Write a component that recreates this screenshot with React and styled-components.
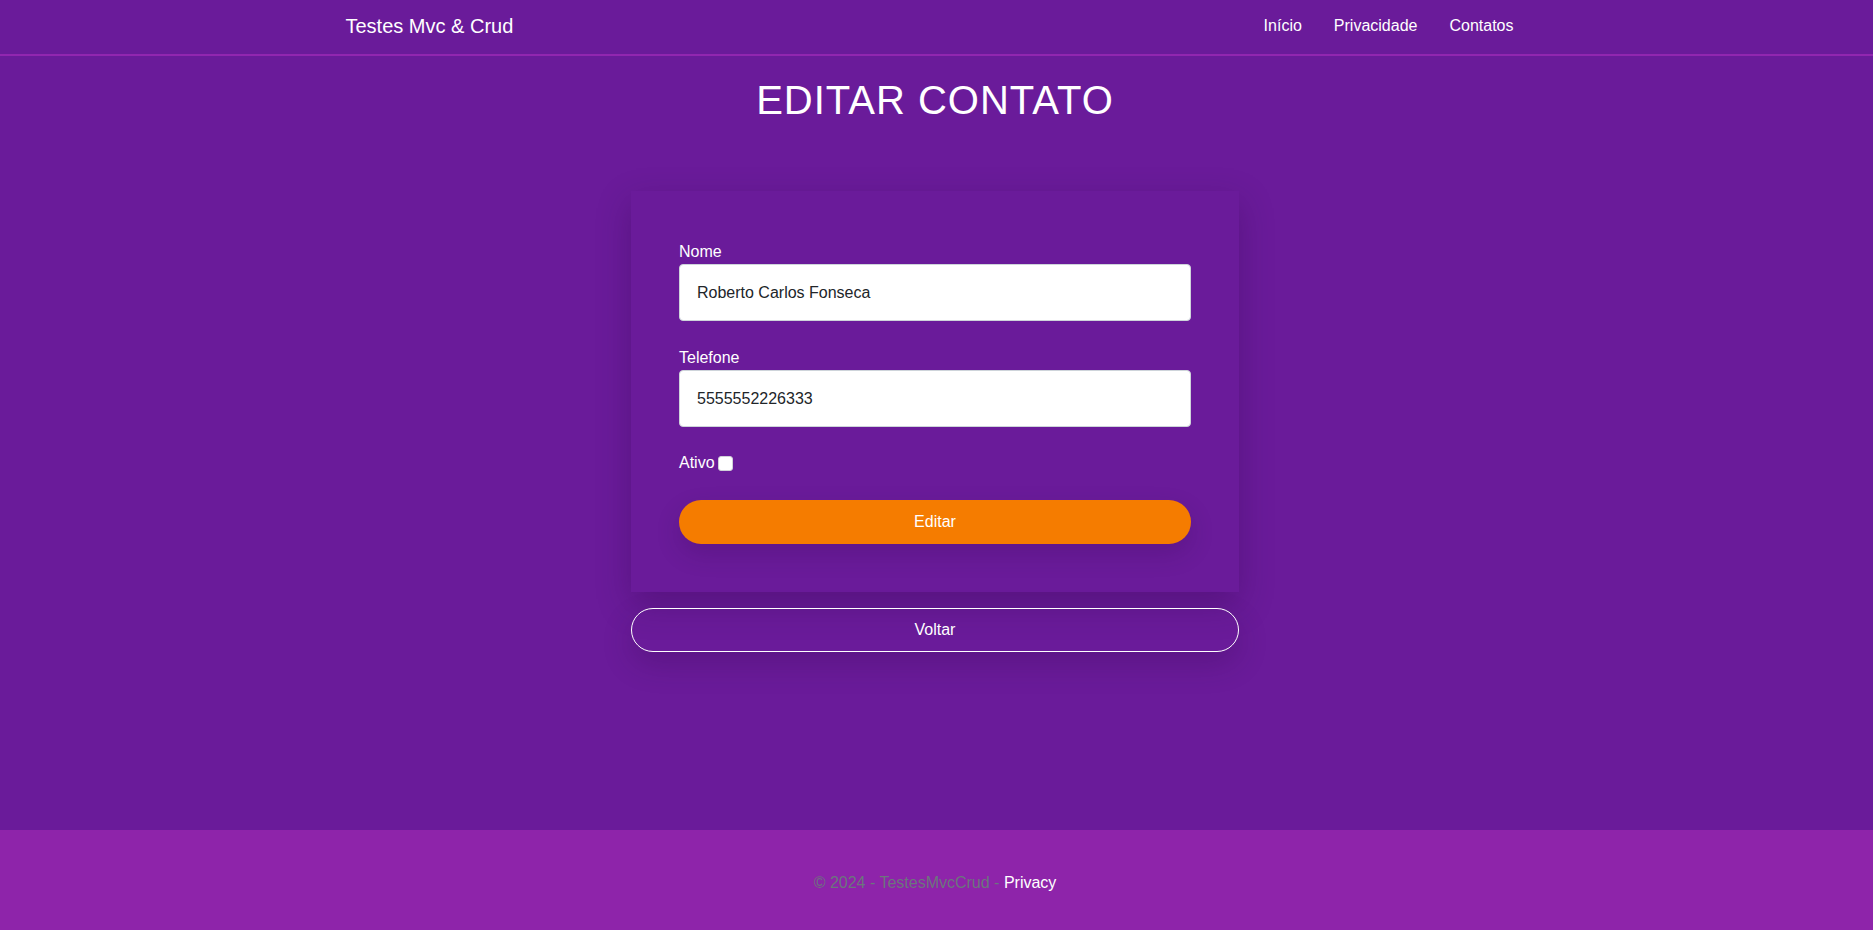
import React, { useState } from 'react';
import styled, { createGlobalStyle } from 'styled-components';

const GlobalStyle = createGlobalStyle`
  * { box-sizing: border-box; }
  html, body { margin: 0; padding: 0; }
  body {
    font-family: "Liberation Sans", Arial, sans-serif;
    font-size: 16px;
    line-height: 1.5;
    background: #6a1b9a;
    color: #fff;
  }
`;

const Page = styled.div`
  min-height: 100vh;
  display: flex;
  flex-direction: column;
`;

const Navbar = styled.header`
  height: 56px;
  border-bottom: 2px solid #9126b0;
  background: #6a1b9a;
`;

const NavInner = styled.nav`
  width: 1186px;
  margin: 0 auto;
  height: 100%;
  display: flex;
  align-items: center;
  justify-content: space-between;
  padding: 0 0 2px 2px;
`;

const Brand = styled.a`
  font-size: 20px;
  color: #fff;
  text-decoration: none;
`;

const NavLinks = styled.ul`
  list-style: none;
  display: flex;
  margin: 0;
  padding: 0;
`;

const NavLink = styled.a`
  display: block;
  padding: 8px 16px;
  color: #fff;
  text-decoration: none;
  font-size: 16px;
`;

const Main = styled.main`
  flex: 1;
  display: flex;
  flex-direction: column;
  align-items: center;
  padding-right: 3px;
`;

const Title = styled.h1`
  margin: 20px 0 67px;
  font-size: 40px;
  font-weight: 400;
  line-height: 1.2;
  letter-spacing: 1px;
`;

const Card = styled.form`
  width: 608px;
  padding: 48px;
  background: #6a1b9a;
  box-shadow: 0 12px 32px rgba(40, 0, 60, 0.28);
  display: flex;
  flex-direction: column;
`;

const Field = styled.div`
  display: flex;
  flex-direction: column;
  margin-bottom: 24px;
`;

const Label = styled.label`
  font-size: 16px;
  line-height: 24px;
  margin-top: 1px;
`;

const Input = styled.input`
  height: 57px;
  padding: 0 17px;
  font-family: inherit;
  font-size: 16px;
  color: #212529;
  background: #fff;
  border: 1px solid #ced4da;
  border-radius: 4px;
  outline: none;
`;

const CheckRow = styled.label`
  display: flex;
  align-items: center;
  gap: 3px;
  line-height: 24px;
  margin-bottom: 25px;
`;

const Check = styled.input`
  appearance: none;
  width: 15px;
  height: 15px;
  margin: 0;
  background: #fff;
  border: 1px solid #d0d0d8;
  border-radius: 3px;
`;

const Button = styled.button`
  height: 44px;
  border-radius: 22px;
  border: none;
  background: #f57c00;
  color: #fff;
  font-family: inherit;
  font-size: 16px;
  cursor: pointer;
  box-shadow: 0 10px 24px rgba(40, 0, 60, 0.18);
`;

const OutlineButton = styled.a`
  width: 608px;
  height: 44px;
  margin-top: 16px;
  display: flex;
  align-items: center;
  justify-content: center;
  border: 1px solid #fff;
  border-radius: 22px;
  color: #fff;
  text-decoration: none;
  font-size: 16px;
  box-shadow: 0 12px 30px rgba(40, 0, 60, 0.22);
`;

const Footer = styled.footer`
  height: 100px;
  background: #8e24aa;
  display: flex;
  align-items: center;
  justify-content: center;
  color: #6c757d;
  font-size: 16px;
  padding: 6px 3px 0 0;
`;

const FooterLink = styled.a`
  color: #fff;
  text-decoration: none;
`;

export default function App() {
  const [nome, setNome] = useState('Roberto Carlos Fonseca');
  const [telefone, setTelefone] = useState('5555552226333');
  const [ativo, setAtivo] = useState(false);

  return (
    <>
      <GlobalStyle />
      <Page>
        <Navbar>
          <NavInner>
            <Brand href="#">Testes Mvc &amp; Crud</Brand>
            <NavLinks>
              <li><NavLink href="#">Início</NavLink></li>
              <li><NavLink href="#">Privacidade</NavLink></li>
              <li><NavLink href="#">Contatos</NavLink></li>
            </NavLinks>
          </NavInner>
        </Navbar>
        <Main>
          <Title>EDITAR CONTATO</Title>
          <Card onSubmit={(e) => e.preventDefault()}>
            <Field>
              <Label htmlFor="nome">Nome</Label>
              <Input id="nome" value={nome} onChange={(e) => setNome(e.target.value)} />
            </Field>
            <Field>
              <Label htmlFor="telefone">Telefone</Label>
              <Input id="telefone" value={telefone} onChange={(e) => setTelefone(e.target.value)} />
            </Field>
            <CheckRow>
              Ativo
              <Check type="checkbox" checked={ativo} onChange={(e) => setAtivo(e.target.checked)} />
            </CheckRow>
            <Button type="submit">Editar</Button>
          </Card>
          <OutlineButton href="#">Voltar</OutlineButton>
        </Main>
        <Footer>
          © 2024 - TestesMvcCrud -&nbsp;<FooterLink href="#">Privacy</FooterLink>
        </Footer>
      </Page>
    </>
  );
}
